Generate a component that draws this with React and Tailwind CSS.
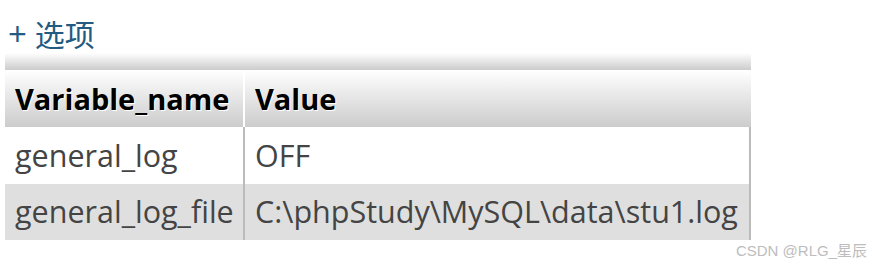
export default function App() {
  const font = { fontFamily: '"Open Sans", "Noto Sans CJK SC", sans-serif' };
  return (
    <div className="relative w-[872px] h-[266px] bg-white overflow-hidden" style={font}>
      <div className="h-[53px] pl-[8px] pt-[16px] text-[30px] leading-[36px] text-[#235a81]">
        <span className="text-[33px]">+</span> 选项
      </div>
      <div className="ml-[5px] w-[746px]">
        <div className="h-[17px] bg-gradient-to-b from-white to-[#cccccc]" />
        <div className="flex h-[57px] text-[29px] font-bold text-black [text-shadow:1px_1px_0_#fff]">
          <div className="w-[238px] flex items-center pl-[10px] bg-gradient-to-b from-white to-[#cccccc]">
            Variable_name
          </div>
          <div className="w-[2px] bg-white" />
          <div className="flex-1 flex items-center pl-[10px] bg-gradient-to-b from-white to-[#cccccc]">
            Value
          </div>
        </div>
        <div className="flex h-[57px] text-[30.5px] text-[#444] bg-white">
          <div className="w-[238px] flex items-center pl-[10px]">general_log</div>
          <div className="w-[2px] bg-[#bbbbbb]" />
          <div className="flex-1 flex items-center pl-[10px] border-r-2 border-[#bbbbbb]">OFF</div>
        </div>
        <div className="flex h-[56px] text-[30.5px] text-[#444] bg-[#dfdfdf]">
          <div className="w-[238px] flex items-center pl-[10px] whitespace-nowrap">general_log_file</div>
          <div className="w-[2px] bg-[#bbbbbb]" />
          <div className="flex-1 flex items-center pl-[10px] border-r-2 border-[#bbbbbb] whitespace-nowrap">
            C:\phpStudy\MySQL\data\stu1.log
          </div>
        </div>
      </div>
      <div
        className="absolute right-[5px] top-[241px] text-[15px] leading-[20px] text-[#bdbdbd]"
        style={{ fontFamily: '"Liberation Sans", "Noto Sans CJK SC", sans-serif' }}
      >
        CSDN @RLG_星辰
      </div>
    </div>
  );
}
